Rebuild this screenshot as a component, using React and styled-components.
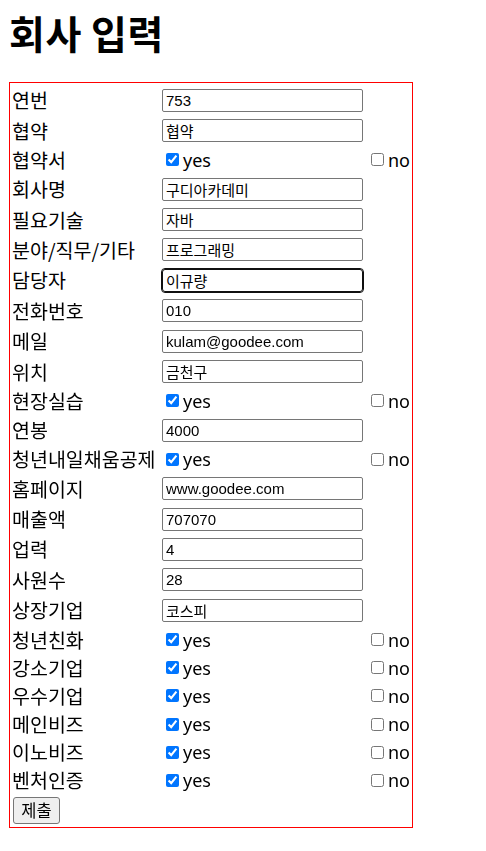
import React from "react";
import styled, { createGlobalStyle } from "styled-components";

const GlobalStyle = createGlobalStyle`
  html, body { margin: 0; padding: 0; background: #fff; }
  body { font-family: "Noto Sans", "Noto Sans CJK KR", sans-serif; color: #000; }
`;

const Page = styled.div`
  padding: 12px 8px 8px 9px;
`;

const Title = styled.h1`
  margin: 0 0 30px 0;
  font-family: "Noto Sans CJK KR", sans-serif;
  font-size: 39px;
  line-height: 40px;
  font-weight: 700;
  letter-spacing: 0.5px;
`;

const Form = styled.form`
  width: 397px;
  border: 1px solid #ff0000;
  padding: 2px 3px 3px 2px;
  display: flex;
  flex-direction: column;
`;

const Row = styled.div`
  display: grid;
  grid-template-columns: 150px 205px auto;
  align-items: center;
  height: ${(p) => (p.$check ? "28.2px" : "30.4px")};
`;

const Label = styled.span`
  font-family: "Noto Sans CJK KR", sans-serif;
  font-size: 19.5px;
  line-height: 24px;
  white-space: nowrap;
`;

const TextInput = styled.input`
  box-sizing: border-box;
  width: 201px;
  height: 23px;
  margin: 0;
  padding: 1px 3px;
  border: 1px solid #767676;
  border-radius: 2px;
  font-family: "Liberation Sans", "Noto Sans CJK KR", sans-serif;
  font-size: 15px;
  color: #000;
  background: #fff;
  &:focus {
    outline: 1px solid #101010;
    outline-offset: 0;
    border-color: #101010;
    border-radius: 3px;
  }
`;

const Choice = styled.label`
  display: flex;
  align-items: center;
  font-family: "Noto Sans", "Noto Sans CJK KR", sans-serif;
  font-size: 18px;
  line-height: 24px;
`;

const Box = styled.input`
  width: 13px;
  height: 13px;
  margin: 0 4px 0 4px;
  accent-color: #0075ff;
`;

const ButtonRow = styled.div`
  margin-top: 2px;
  padding-left: 1px;
  display: flex;
`;

const Submit = styled.button`
  box-sizing: border-box;
  width: 47px;
  height: 27px;
  padding: 0;
  border: 1px solid #767676;
  border-radius: 3px;
  background: #efefef;
  font-family: "Noto Sans CJK KR", sans-serif;
  font-size: 16.5px;
  line-height: 20px;
  color: #000;
`;

const rows = [
  { label: "연번", value: "753" },
  { label: "협약", value: "협약" },
  { label: "협약서", check: true },
  { label: "회사명", value: "구디아카데미" },
  { label: "필요기술", value: "자바" },
  { label: "분야/직무/기타", value: "프로그래밍" },
  { label: "담당자", value: "이규량", focus: true },
  { label: "전화번호", value: "010" },
  { label: "메일", value: "kulam@goodee.com" },
  { label: "위치", value: "금천구" },
  { label: "현장실습", check: true },
  { label: "연봉", value: "4000" },
  { label: "청년내일채움공제", check: true },
  { label: "홈페이지", value: "www.goodee.com" },
  { label: "매출액", value: "707070" },
  { label: "업력", value: "4" },
  { label: "사원수", value: "28" },
  { label: "상장기업", value: "코스피" },
  { label: "청년친화", check: true },
  { label: "강소기업", check: true },
  { label: "우수기업", check: true },
  { label: "메인비즈", check: true },
  { label: "이노비즈", check: true },
  { label: "벤처인증", check: true },
];

export default function App() {
  return (
    <>
      <GlobalStyle />
      <Page>
        <Title>회사 입력</Title>
        <Form onSubmit={(e) => e.preventDefault()}>
          {rows.map((r, i) => (
            <Row key={i} $check={r.check}>
              <Label>{r.label}</Label>
              {r.check ? (
                <>
                  <Choice>
                    <Box type="checkbox" defaultChecked />
                    yes
                  </Choice>
                  <Choice>
                    <Box type="checkbox" />
                    no
                  </Choice>
                </>
              ) : (
                <TextInput type="text" defaultValue={r.value} autoFocus={r.focus} />
              )}
            </Row>
          ))}
          <ButtonRow>
            <Submit type="submit">제출</Submit>
          </ButtonRow>
        </Form>
      </Page>
    </>
  );
}
